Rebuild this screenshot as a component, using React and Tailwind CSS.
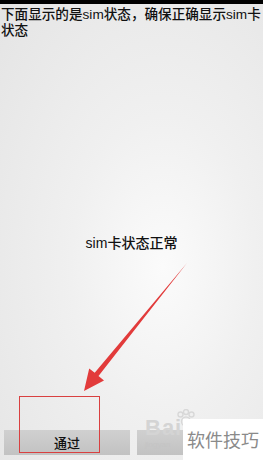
import React from "react";

const font = { fontFamily: '"Liberation Sans", "Noto Sans CJK SC", sans-serif' };

export default function App() {
  return (
    <div
      className="relative w-[263px] h-[460px] overflow-hidden flex flex-col bg-[radial-gradient(ellipse_at_62%_58%,#fbfbfb_0%,#f0f0f0_40%,#e4e4e4_100%)] text-[#222]"
      style={font}
    >
      {/* status bar */}
      <div className="h-[4px] bg-black shrink-0" />

      {/* prompt */}
      <p className="text-[13.6px] leading-[16px] pt-[3px] pl-[1px] text-[#111] font-medium">
        下面显示的是sim状态，确保正确显示sim卡状态
      </p>

      {/* status */}
      <div className="flex-1 flex items-start justify-center pt-[196px]">
        <span className="text-[14px] leading-[16px] text-[#111] font-medium">sim卡状态正常</span>
      </div>

      {/* buttons */}
      <div className="flex gap-[7px] px-[4px] pb-[5px] shrink-0">
        <button className="w-[126px] h-[25px] bg-gradient-to-b from-[#d0d0d0] to-[#c2c2c2] text-[13px] text-[#111] font-medium pt-[3px]">
          通过
        </button>
        <button className="flex-1 h-[25px] bg-gradient-to-b from-[#d0d0d0] to-[#c2c2c2]" />
      </div>

      {/* annotation: red box */}
      <div className="absolute left-[19px] top-[396px] w-[81px] h-[57px] border border-[#d94040]" />

      {/* annotation: arrow */}
      <svg className="absolute inset-0 pointer-events-none" width="263" height="460" viewBox="0 0 263 460">
        <polygon
          points="187,263 98.5,376 104,380.5 84,391 89.2,368.5 94.7,372.8"
          fill="#e23b3b"
        />
      </svg>

      {/* watermark */}
      <svg className="absolute left-[176px] top-[409px]" width="20" height="18" viewBox="0 0 20 18">
        <g fill="none" stroke="#d8d8d8" strokeWidth="1.4">
          <circle cx="4.5" cy="5.5" r="2.5" />
          <circle cx="10" cy="3" r="2.5" />
          <circle cx="15.5" cy="5.5" r="2.5" />
          <circle cx="10" cy="12.5" r="4.5" />
        </g>
      </svg>
      <div className="absolute left-[145px] top-[417px] flex flex-col leading-none text-[#d4d4d4]">
        <span className="text-[22px] font-bold tracking-[1px]">Bai</span>
        <span className="text-[8px] mt-[2px] text-[#c4c4c4]">jingyan</span>
      </div>
      <div className="absolute left-[183px] top-[419px] w-[80px] h-[41px] bg-white flex items-center justify-center">
        <span className="text-[18px] text-[#8a8a8a]" style={{ fontFamily: '"Noto Sans CJK SC", sans-serif' }}>
          软件技巧
        </span>
      </div>
    </div>
  );
}
